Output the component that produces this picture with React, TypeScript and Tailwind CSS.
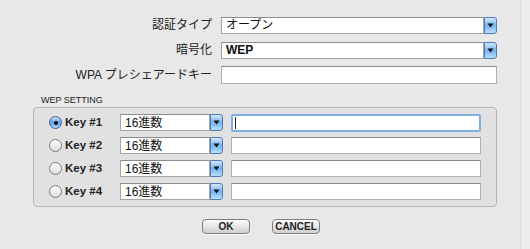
import React from 'react';

const font = { fontFamily: '"Liberation Sans", "Noto Sans CJK JP", sans-serif' };

const Arrow: React.FC = () => (
  <div className="flex h-full w-[13px] shrink-0 items-center justify-center rounded-r-[3px] border border-[#5378b8] bg-gradient-to-b from-[#d4e9fd] via-[#74b2f2] to-[#b8e0ff]">
    <svg width="7" height="5" viewBox="0 0 7 5">
      <path d="M0.5 0.5 L6.5 0.5 L3.5 4.5 Z" fill="#111" />
    </svg>
  </div>
);

const Select: React.FC<{ value: string; className: string; bold?: boolean }> = ({ value, className, bold }) => (
  <div className={`flex h-[17px] items-stretch ${className}`}>
    <div className={`flex flex-1 items-center border border-[#a5a5a5] border-t-[#8c8c8c] bg-white pl-[4px] text-[12px] leading-none text-[#111] ${bold ? 'font-bold' : ''}`}>
      {value}
    </div>
    <Arrow />
  </div>
);

const Field: React.FC<{ className: string; focused?: boolean }> = ({ className, focused }) =>
  focused ? (
    <div className={`flex h-[18px] items-center rounded-[2px] border-2 border-[#7eaee3] bg-white ${className}`}>
      <div className="ml-[2px] h-[12px] w-px bg-[#222]" />
    </div>
  ) : (
    <div className={`h-[17px] border border-[#b0b0b0] border-t-[#8a8a8a] bg-white ${className}`} />
  );

const Radio: React.FC<{ checked?: boolean }> = ({ checked }) =>
  checked ? (
    <div className="flex h-[13px] w-[13px] items-center justify-center rounded-full border border-[#3f5f9c] bg-gradient-to-b from-[#cfe6fc] via-[#5f9fe6] to-[#a8d6ff]">
      <div className="h-[4px] w-[4px] rounded-full bg-[#111]" />
    </div>
  ) : (
    <div className="h-[13px] w-[13px] rounded-full border border-[#7c7c7c] bg-gradient-to-b from-[#ffffff] to-[#dcdcdc]" />
  );

const Button: React.FC<{ label: string }> = ({ label }) => (
  <div className="flex h-[15px] w-[48px] items-center justify-center rounded-[4px] border border-[#7e7e7e] bg-gradient-to-b from-[#fdfdfd] via-[#e6e6e6] to-[#cfcfcf] text-[10px] font-bold leading-none text-[#222] shadow-[0_1px_0_rgba(255,255,255,0.7)]">
    {label}
  </div>
);

export default function App() {
  const keys = ['Key #1', 'Key #2', 'Key #3', 'Key #4'];

  return (
    <div className="flex h-[249px] w-[530px] bg-[#e8e8e8]" style={font}>
      <div className="flex w-[520px] flex-col">
        <div className="mt-[16px] grid grid-cols-[212px_276px] items-center gap-x-[9px] gap-y-[7px] text-[12px] text-[#222]">
          <div className="text-right">認証タイプ</div>
          <Select value="オープン" className="w-[276px]" />
          <div className="text-right">暗号化</div>
          <Select value="WEP" className="w-[276px]" bold />
          <div className="text-right">WPA プレシェアードキー</div>
          <div className="h-[18px] border border-[#b0b0b0] border-t-[#8a8a8a] bg-white" />
        </div>

        <div className="ml-[41px] mt-[12px] text-[9px] leading-none text-[#222]">WEP SETTING</div>

        <div className="ml-[33px] mt-[2px] flex h-[100px] w-[464px] flex-col gap-[6px] rounded-[4px] border border-[#b4b4b4] bg-[#e1e1e1] pt-[6px]">
          {keys.map((k, i) => (
            <div key={k} className="flex h-[17px] items-center">
              <div className="ml-[15px]">
                <Radio checked={i === 0} />
              </div>
              <div className="ml-[3px] w-[55px] text-[11.5px] font-bold text-[#222]">{k}</div>
              <Select value="16進数" className="w-[103px]" />
              <Field className="ml-[8px] w-[250px]" focused={i === 0} />
            </div>
          ))}
        </div>

        <div className="ml-[202px] mt-[12px] flex gap-[22px]">
          <Button label="OK" />
          <Button label="CANCEL" />
        </div>
      </div>
      <div className="w-[10px] border-l border-[#dedede] bg-[#ececec]" />
    </div>
  );
}
